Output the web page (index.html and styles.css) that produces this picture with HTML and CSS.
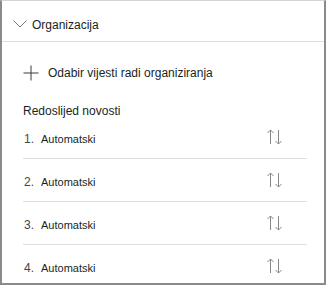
FILE: index.html
```html
<!DOCTYPE html>
<html>
<head>
<meta charset="utf-8">
<link rel="stylesheet" href="styles.css">
</head>
<body>
<div class="panel">
  <div class="header">
    <svg class="chevron" width="14" height="8" viewBox="0 0 14 8"><polyline points="0.5,0.5 7,7 13.5,0.5" fill="none" stroke="#7a7876" stroke-width="1"/></svg>
    <span class="header-title">Organizacija</span>
  </div>
  <div class="add-row">
    <svg class="plus" width="16" height="16" viewBox="0 0 16 16"><path d="M8 0.5V15.5M0.5 8H15.5" fill="none" stroke="#3b3a39" stroke-width="1"/></svg>
    <span class="add-text">Odabir vijesti radi organiziranja</span>
  </div>
  <div class="section-title">Redoslijed novosti</div>
  <ul class="list">
    <li class="row"><span class="label"><span class="num">1.</span><span class="name">Automatski</span></span><svg class="sort" width="16" height="16" viewBox="0 0 16 16"><path d="M3.5 1V15M0.5 4L3.5 1L6.5 4M11.5 1V15M8.5 12L11.5 15L14.5 12" fill="none" stroke="#8a8886" stroke-width="1"/></svg></li>
    <li class="row"><span class="label"><span class="num">2.</span><span class="name">Automatski</span></span><svg class="sort" width="16" height="16" viewBox="0 0 16 16"><path d="M3.5 1V15M0.5 4L3.5 1L6.5 4M11.5 1V15M8.5 12L11.5 15L14.5 12" fill="none" stroke="#8a8886" stroke-width="1"/></svg></li>
    <li class="row"><span class="label"><span class="num">3.</span><span class="name">Automatski</span></span><svg class="sort" width="16" height="16" viewBox="0 0 16 16"><path d="M3.5 1V15M0.5 4L3.5 1L6.5 4M11.5 1V15M8.5 12L11.5 15L14.5 12" fill="none" stroke="#8a8886" stroke-width="1"/></svg></li>
    <li class="row"><span class="label"><span class="num">4.</span><span class="name">Automatski</span></span><svg class="sort" width="16" height="16" viewBox="0 0 16 16"><path d="M3.5 1V15M0.5 4L3.5 1L6.5 4M11.5 1V15M8.5 12L11.5 15L14.5 12" fill="none" stroke="#8a8886" stroke-width="1"/></svg></li>
  </ul>
</div>
</body>
</html>
```
FILE: styles.css
```css
html, body {
  margin: 0;
  padding: 0;
  background: #ffffff;
}
.panel {
  width: 326px;
  height: 285px;
  box-sizing: border-box;
  border: 2px solid #8a8a8a;
  border-top: 1px solid #d4d4d4;
  overflow: hidden;
  font-family: "Liberation Sans", Arial, sans-serif;
  color: #201f1e;
  background: #ffffff;
}
.header {
  height: 41px;
  box-sizing: border-box;
  border-bottom: 1px solid #e1dfdd;
  display: flex;
  align-items: flex-start;
  padding: 17px 0 0 11px;
}
.chevron {
  display: block;
  margin-top: 2px;
  margin-right: 5px;
}
.header-title {
  font-size: 12px;
  line-height: 14px;
}
.add-row {
  display: flex;
  align-items: center;
  margin-top: 23px;
  padding-left: 21px;
  height: 16px;
}
.plus {
  display: block;
  margin-right: 9px;
}
.add-text {
  font-size: 12px;
  line-height: 16px;
}
.section-title {
  margin-top: 25px;
  padding-left: 21px;
  font-size: 12px;
  line-height: 10px;
  height: 10px;
}
.list {
  list-style: none;
  margin: 0 17px 0 21px;
  padding: 0;
}
.row {
  height: 42px;
  display: flex;
  align-items: center;
  justify-content: space-between;
  border-bottom: 1px solid #e1dfdd;
}
.row:last-child {
  border-bottom: none;
}
.label {
  display: flex;
  align-items: baseline;
  margin-top: 3px;
  line-height: 14px;
}
.num {
  font-size: 12px;
  color: #484644;
  width: 17px;
  padding-left: 1px;
}
.name {
  font-size: 11px;
  color: #201f1e;
}
.sort {
  display: block;
  margin-right: 24px;
}
```
